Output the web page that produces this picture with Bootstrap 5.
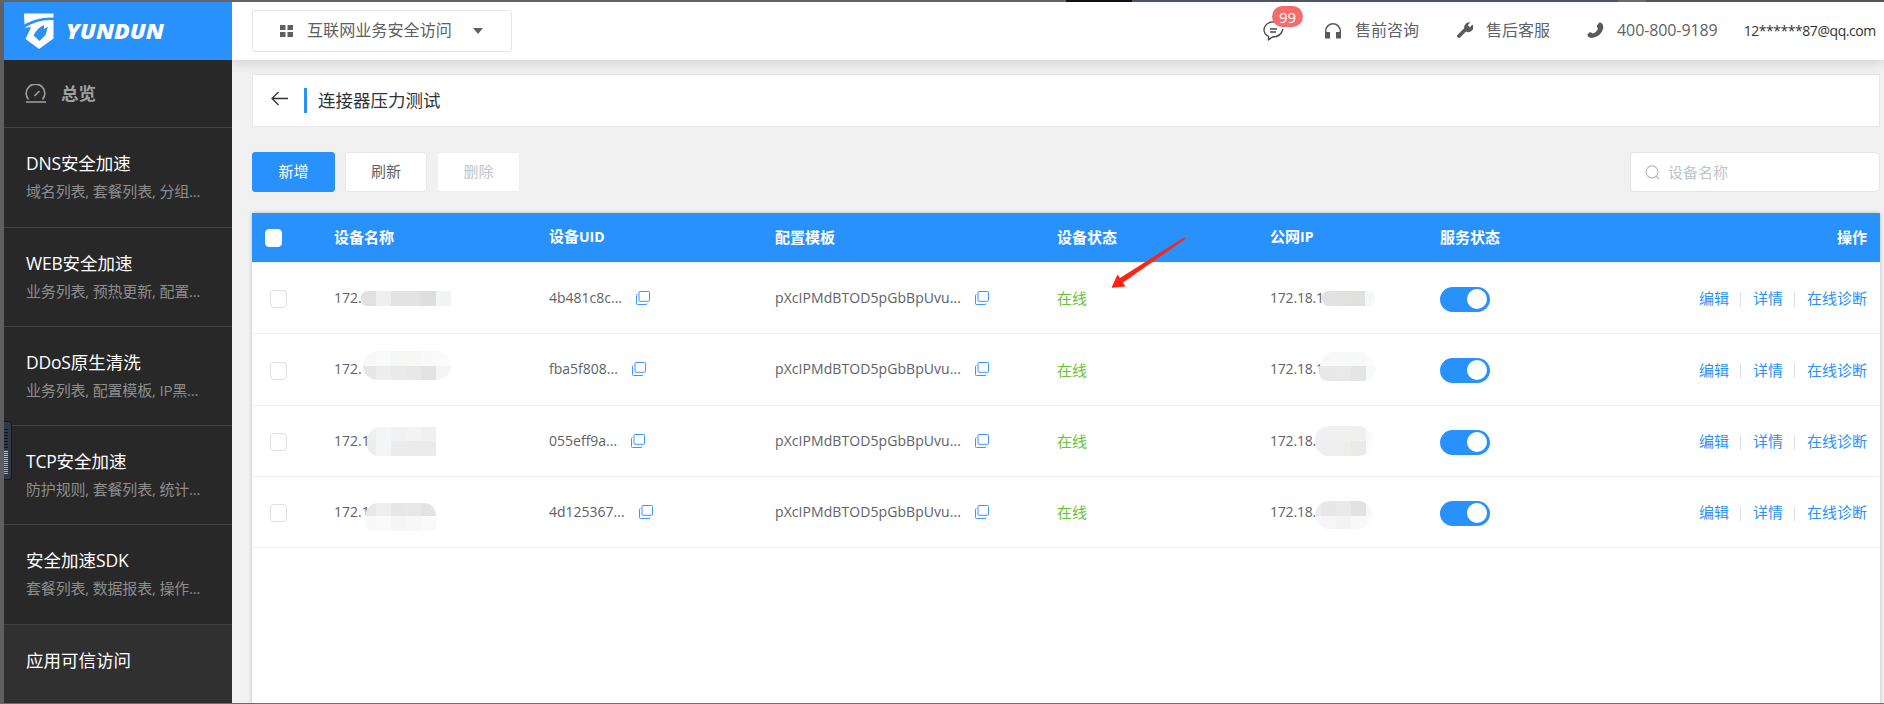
<!DOCTYPE html>
<html lang="zh-CN">
<head>
<meta charset="utf-8">
<title>连接器压力测试</title>
<link href="https://cdn.jsdelivr.net/npm/bootstrap@5.3.0/dist/css/bootstrap.min.css" rel="stylesheet">
<style>
:root{--brand:#2991fb}
body{font-family:"Open Sans","Noto Sans CJK SC",sans-serif;font-size:15px;color:#606266;background:#f1f1f1;height:704px;overflow:hidden;line-height:1.2}
svg{display:block;flex:none}
.frame{height:704px;padding:2px 0 0 4px;background:#5f5f5f}
.top-edge{top:0;left:0;right:0;height:2px;background:linear-gradient(90deg,#636363 0 1066px,#111 1066px 1132px,#4b566b 1132px 1618px,#6b6967 1618px 1646px,#555 1646px)}
.bottom-edge{bottom:0;left:0;right:0;height:1px;background:#6c6c6c}
.side{width:228px;background:#282828;flex:none}
.brand{height:58px;background:var(--brand);padding-left:20px}
.side-item{border-bottom:1px solid #414141;padding:22px 10px 0 22px;height:99px;color:#fff}
.side-item.tall{height:100px}
.side-item b{display:block;font-weight:400;font-size:17.5px;line-height:26px}
.side-item span{display:block;font-size:15px;line-height:22px;margin-top:4px;color:#8d8d8d;letter-spacing:-.18px;white-space:nowrap}
.side-item i{font-style:normal;letter-spacing:-.2px}
.side-home{height:68px;border-bottom:1px solid #414141;padding-left:20px;color:#a0a0a0;font-size:17.5px;font-weight:700;gap:14px}
.head{height:58px;background:#fff;box-shadow:0 2px 12px rgba(0,21,41,.16);z-index:1}
.picker{width:260px;height:42px;border:1px solid #e4e4e4;border-radius:3px;margin:0 0 0 20px;padding-left:27px;font-size:16.1px;color:#606060}
.tool{color:#606266;font-size:16px;white-space:nowrap;width:621px}
.chat{width:62px;flex:none}
.count{left:9px;top:-15px;width:31px;height:21px;border-radius:11px;background:#f56c6c;color:#fff;font-size:15px;line-height:22px;text-align:center}
.panel{margin:14px 4px 0 20px;height:53px;background:#fff;border:1px solid #e6e6e6;padding-left:18px;color:#303133;font-size:17.5px}
.bar-mark{width:3px;height:25px;background:var(--brand);margin:0 11px 0 16px}
.tools{margin:25px 4px 0 20px;height:40px}
.tools .btn{height:40px;font-size:15px;border-radius:3px;padding:0 0 2px;--bs-btn-border-color:#e4e7ed;background:#fff;color:#606266}
.tools .btn.main{width:83px;background:var(--brand);color:#fff;border-color:var(--brand)}
.tools .btn:disabled{color:#c0c4cc;opacity:1;border-color:#ebeef5}
.find{width:250px;height:40px;border:1px solid #e4e4e4;border-radius:4px;background:#fff;color:#c0c4cc;padding-left:14px;gap:8px}
.grid-card{margin:21px 4px 0 20px;background:#fff;box-shadow:0 0 4px rgba(0,0,0,.22);height:491px}
.grid-card table{table-layout:fixed;width:1628px;margin:0;border-collapse:separate;border-spacing:0}
.grid-card th{height:50px;background:var(--brand);color:#fff;padding:0 13px 2px 12px;border-bottom:1px solid #ebeef5;font-weight:700;vertical-align:middle;font-size:15px}
.grid-card th i{font-style:normal;font-size:14px}
.grid-card td{height:71px;padding:0 13px 0 12px;border-bottom:1px solid #ebeef5;vertical-align:middle;position:relative}
.grid-card tr:nth-child(2) td{height:72px}
.tick{width:17px;height:18px;border:1px solid #dfdfdf;border-radius:4px;background:#fff;margin:2px 0 0 6px}
th .tick{margin-left:1px;border-color:#fff}
.num{font-size:14px}
.ip{letter-spacing:-.2px}
.tpl{letter-spacing:.07px}
.online{color:#67c23a}
.sw{width:50px;height:25px;border-radius:13px;background:var(--brand);padding:2px 3px 0 0;margin-top:2px}
.sw::after{content:"";display:block;width:20px;height:20px;border-radius:50%;background:#fff;margin-left:auto}
.acts{color:var(--brand);gap:11.5px}
.acts u{width:1px;height:15px;background:#dcdfe6;margin-top:2px}
.mosaic{position:absolute}
.gadget{left:4px;top:421px;width:8px;height:59px;border:1px solid #15181f;border-left:0;border-radius:0 3px 3px 0;background:#30384a;padding-top:7px}
.gadget::before,.gadget::after{content:"";display:block;width:4px;background:repeating-linear-gradient(#11151d 0 1px,#30384a 1px 3px);height:20px}
.gadget::after{height:24px;margin-top:2px;background:repeating-linear-gradient(transparent 0 1px,#30384a 1px 2px),linear-gradient(#c8e24b,#35d8c6)}
.pointer{left:1105px;top:230px;z-index:3}
</style>
</head>
<body>
<svg width="0" height="0" class="position-absolute"><defs>
<symbol id="copy" viewBox="0 0 14 14"><path d="M4 .5h8.500q1 0 1 1v7.800q0 1-1 1H4q-1 0-1-1V1.500q0-1 1-1zM1.500 3.500q-1 0-1 1v8q0 1 1 1h8.500q1 0 1-1" fill="none" stroke="#3f92ff" stroke-width="1"/></symbol>
</defs></svg>
<div class="frame d-flex position-relative">
<div class="top-edge position-absolute"></div>
<aside class="side">
  <div class="brand d-flex align-items-center">
    <svg width="145" height="38" viewBox="0 0 145 38" fill="#fff"><path d="M0 1.500H29.500V5.500C18 5 8 8 .5 12.500ZM0 16.500C8 10.500 18 7.500 29.500 8V26.500L15 37 1.500 27 7 15.500Q4 14.500 0 16.500ZM20 13Q13 16 9.500 23.500L15.500 29 21.500 23 24 14.500 20 17Z" fill-rule="evenodd"/>
    <text x="42" y="27" font-family="Open Sans" font-weight="800" font-style="italic" font-size="21" textLength="98" lengthAdjust="spacingAndGlyphs">YUNDUN</text></svg>
  </div>
  <div class="side-home d-flex align-items-center">
    <svg width="23" height="20" viewBox="0 0 23 20" fill="none" stroke="#a0a0a0" stroke-width="1.600"><path d="M4.500 15.500A9.300 9.300 0 1 1 18.500 15.500M2 18H22M10.500 12L15.500 7"/></svg>总览</div>
  <div class="side-item tall"><b><i>DNS</i>安全加速</b><span>域名列表, 套餐列表, 分组...</span></div>
  <div class="side-item"><b><i>WEB</i>安全加速</b><span>业务列表, 预热更新, 配置...</span></div>
  <div class="side-item"><b><i>DDoS</i>原生清洗</b><span>业务列表, 配置模板, <i>IP</i>黑...</span></div>
  <div class="side-item"><b><i>TCP</i>安全加速</b><span>防护规则, 套餐列表, 统计...</span></div>
  <div class="side-item tall"><b>安全加速<i>SDK</i></b><span>套餐列表, 数据报表, 操作...</span></div>
  <div class="side-item border-0" style="background:#303030;height:79px"><b>应用可信访问</b></div>
</aside>
<main class="flex-grow-1 overflow-hidden" style="background:#f1f1f1">
  <header class="head d-flex align-items-center position-relative">
    <div class="picker d-flex align-items-center">
      <svg width="13" height="12" viewBox="0 0 13 12" fill="#606060"><path d="M0 0h5.500v5H0zM7.500 0H13v5H7.500zM0 7h5.500v5H0zM7.500 7H13v5H7.500z"/></svg>
      <span style="margin:0 21px 0 14px">互联网业务安全访问</span>
      <svg width="10" height="6" viewBox="0 0 10 6"><path d="M0 0H10L5 6Z" fill="#606060"/></svg>
    </div>
    <div class="d-flex align-items-center tool ms-auto">
      <div class="position-relative chat">
        <svg width="21" height="20" viewBox="0 0 21 20" fill="none" stroke="#444" stroke-width="1.300"><path d="M13 1.500Q9.500 .3 6 1.800Q1 4.500 1 9Q1.300 13.500 5.500 15.300V18.800L9.500 16Q18 16 20 8M7 8h7M7 11h6"/></svg>
        <span class="count position-absolute">99</span>
      </div>
      <svg width="16" height="16" viewBox="0 0 16 16" fill="#5a5a5a"><path d="M0 15.500V8a8 8 0 0 1 16 0v7.500h-5V9h3.500V8a6.500 6.500 0 0 0-13 0v1H5v6.500z"/></svg>
      <span style="margin:0 38px 0 14px">售前咨询</span>
      <svg width="16" height="16" viewBox="0 0 16 16" style="margin-top:-3px"><path d="M2 14L9 7" stroke="#5a5a5a" stroke-width="3.800" stroke-linecap="round"/><path d="M13.200 .4L10.800 3.100 12.800 5.200 15.500 2.600A4.800 4.800 0 0 1 8.500 9 5.200 5.200 0 0 1 13.200 .4Z" fill="#5a5a5a"/></svg>
      <span style="margin:0 37px 0 13px">售后客服</span>
      <svg width="17" height="16" viewBox="0 0 17 16" style="margin-top:-3px"><path d="M12.500 .3Q16.800 1 16.200 6.500 14 14.500 5 16 1 16 .3 12.500L3 10 6 11.600Q9.500 10.200 11 7L9.600 4Z" fill="#5a5a5a"/></svg>
      <span style="margin:0 26px 0 13px;letter-spacing:-.1px">400-800-9189</span>
      <span style="font-size:14px;letter-spacing:-.45px;color:#333">12******87@qq.com</span>
    </div>
  </header>
  <div class="panel d-flex align-items-center">
    <svg width="17" height="15" viewBox="0 0 17 15" fill="none" stroke="#333" stroke-width="1.300" style="margin-top:-4px"><path d="M17 7.500H1M7.500 1L1 7.500 7.500 14"/></svg>
    <div class="bar-mark"></div>连接器压力测试
  </div>
  <div class="tools d-flex">
    <button class="btn main">新增</button>
    <button class="btn" style="width:82px;margin:0 10px">刷新</button>
    <button class="btn" style="width:83px" disabled>删除</button>
    <div class="find d-flex align-items-center ms-auto">
      <svg width="15" height="15" viewBox="0 0 15 15" fill="none" stroke="#b4bbc5" stroke-width="1.200"><circle cx="7" cy="6.800" r="6"/><path d="M11 11L14 14"/></svg>设备名称</div>
  </div>
  <div class="grid-card">
    <table>
      <colgroup><col style="width:70px"><col style="width:215px"><col style="width:226px"><col style="width:282px"><col style="width:213px"><col style="width:170px"><col></colgroup>
      <thead><tr><th><div class="tick"></div></th><th>设备名称</th><th>设备<i>UID</i></th><th>配置模板</th><th>设备状态</th><th>公网<i>IP</i></th><th>服务状态</th><th class="text-end">操作</th></tr></thead>
      <tbody id="rows"></tbody>
    </table>
  </div>
</main>
<div class="gadget position-absolute"></div>
<svg class="pointer position-absolute" width="85" height="65" viewBox="0 0 85 65"><path d="M6.500 57.700L12.500 44.500 15 48 79 7.500 81 8.500 18 52.500 20.500 56.500Z" fill="#fe2312"/></svg>
<div class="bottom-edge position-absolute"></div>
</div>
<script>
/* Each masked value: left, top within the cell, corner radius, column widths and rows of [height, ...tints] */
const rows=[
 {n:'172.',u:'4b481c8c...',i:'172.18.1',
  a:{x:39,y:28,r:'6px 0 0 6px',w:[15,15,15,15,15,15],t:[[15,'#e2e1e1','#eeefef','#e3e3e4','#e4e3e3','#dedede','#f3f4f4']]},
  b:{x:64,y:28,r:'6px',w:[15,15,13,10],t:[[15,'#e3e1e4','#e1e1e2','#e0e0dd','#f5f8fb']]}},
 {n:'172.1',u:'fba5f808...',i:'172.18.1',
  a:{x:41,y:17,r:'16px',w:[13,15,15,15,15,15],t:[[15,'#f8f8f8','#fafafa','#f6f7f7','#f7f7f6','#f9f9f9','#fbfbfb'],[14,'#e8e7e7','#ededee','#e9eaea','#e8e8e8','#e4e2e5','#f4f5f5']]},
  b:{x:62,y:18,r:'15px 18px 14px 8px',w:[15,16,15,10],t:[[14,'#f8f8f9','#f7f8f8','#f9f9f9','#fbfcfc'],[15,'#e8e7e9','#e9e9ea','#e3e5e4','#f8f9fb']]}},
 {n:'172.1',u:'055eff9a...',i:'172.18.',
  a:{x:45,y:21,r:'14px 0 0 12px',w:[9,15,15,15,15],t:[[14,'#efefef','#f4f5f6','#eff1f2','#f3f3f1','#f0f0f0'],[15,'#eeeded','#f4f5f5','#ececec','#ebebeb','#ebebeb']]},
  b:{x:57,y:20,r:'14px',w:[6,15,15,15,6],t:[[15,'#f0f0f0','#f0eff1','#f0f0f0','#f0f0ef','#f8f8fd'],[15,'#f0eff0','#eeedf0','#eeeeed','#eaeae9','#fafaff']]}},
 {n:'172.1',u:'4d125367...',i:'172.18.',
  a:{x:43,y:26,r:'14px 12px 0 6px',w:[11,15,15,15,15],t:[[13,'#e8e8e8','#eeeeef','#e7e7e7','#e8e8e9','#e3e3e5'],[15,'#f9f9f9','#fafafa','#f5f5f5','#f7f7f7','#fafafa']]},
  b:{x:57,y:24,r:'14px',w:[6,15,15,15,6],t:[[15,'#ececec','#e8e6e9','#e9e9e9','#e2e2e2','#f7f9f9'],[13,'#f7f7f7','#f6f6f6','#f3f3f3','#f8f8f9','#fbfbfb']]}}
];
const tiles=m=>`<div class="mosaic overflow-hidden" style="left:${m.x}px;top:${m.y}px;border-radius:${m.r}">`+m.t.map(([h,...c])=>'<div class="d-flex">'+c.map((k,j)=>`<div style="width:${m.w[j]}px;height:${h}px;background:${k}"></div>`).join('')+'</div>').join('')+'</div>';
const copy='<svg width="14" height="14"><use href="#copy"/></svg>';
document.getElementById('rows').innerHTML=rows.map(r=>`<tr><td><div class="tick"></div></td><td class="num">${r.n}${tiles(r.a)}</td>
<td class="num"><div class="d-flex align-items-center" style="gap:14px">${r.u}${copy}</div></td>
<td class="num"><div class="d-flex align-items-center" style="gap:14px"><span class="tpl">pXcIPMdBTOD5pGbBpUvu...</span>${copy}</div></td>
<td class="online">在线</td><td class="num ip">${r.i}${tiles(r.b)}</td><td><div class="sw"></div></td>
<td><div class="acts d-flex justify-content-end align-items-center"><span>编辑</span><u></u><span>详情</span><u></u><span>在线诊断</span></div></td></tr>`).join('');
</script>
<script src="https://cdn.jsdelivr.net/npm/bootstrap@5.3.0/dist/js/bootstrap.bundle.min.js"></script>
</body>
</html>
